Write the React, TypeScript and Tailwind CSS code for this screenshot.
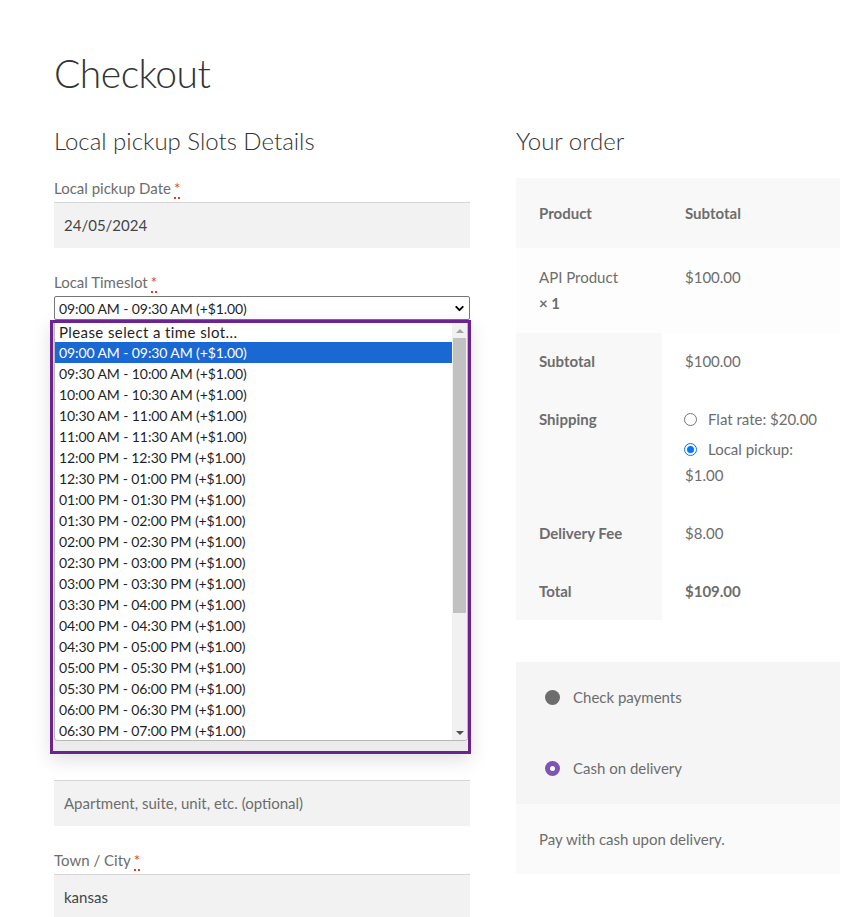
import { ChevronDown } from "lucide-react";

const slots = [
  "09:00 AM - 09:30 AM",
  "09:30 AM - 10:00 AM",
  "10:00 AM - 10:30 AM",
  "10:30 AM - 11:00 AM",
  "11:00 AM - 11:30 AM",
  "12:00 PM - 12:30 PM",
  "12:30 PM - 01:00 PM",
  "01:00 PM - 01:30 PM",
  "01:30 PM - 02:00 PM",
  "02:00 PM - 02:30 PM",
  "02:30 PM - 03:00 PM",
  "03:00 PM - 03:30 PM",
  "03:30 PM - 04:00 PM",
  "04:00 PM - 04:30 PM",
  "04:30 PM - 05:00 PM",
  "05:00 PM - 05:30 PM",
  "05:30 PM - 06:00 PM",
  "06:00 PM - 06:30 PM",
  "06:30 PM - 07:00 PM",
];

const Required = () => (
  <abbr className="ml-[3px] text-[#e2401c] no-underline border-b-2 border-dotted border-[#e2401c] leading-[10px]">
    *
  </abbr>
);

const FieldLabel = ({ text }: { text: string }) => (
  <label className="block h-5 text-[15px] leading-5 text-[#6d6d6d]">
    {text}
    <Required />
  </label>
);

const TimeslotDropdown = () => (
  <div className="absolute left-[-4px] top-full z-10 flex h-[434px] w-[421px] flex-col border-[3px] border-[#6a2391] bg-linear-to-b from-[#cfcfcf] to-[#ececec] pl-px shadow-[0_6px_18px_rgba(0,0,0,0.12)]">
    <div className="flex h-[418px] w-[414px] overflow-hidden rounded-b-[4px] border-x border-b border-[#b9b9b9] bg-white">
      <ul className="flex-1 text-[14px] tracking-[-0.1px] text-[#1f1f1f]">
        <li className="flex h-[19px] items-center pl-[4px] text-[15px] tracking-[0.4px]">Please select a time slot...</li>
        {slots.map((s, i) => (
          <li
            key={s}
            className={
              i === 0
                ? "flex h-[21px] items-center bg-[#1a68d4] pl-[4px] text-white"
                : "flex h-[21px] items-center pl-[4px]"
            }
          >
            {s} (+$1.00)
          </li>
        ))}
      </ul>
      <div className="flex w-[15px] flex-col bg-[#f1f1f1]">
        <div className="flex h-[15px] items-center justify-center">
          <span className="h-0 w-0 border-x-[4px] border-b-[4px] border-x-transparent border-b-[#a3a3a3]" />
        </div>
        <div className="mx-auto h-[275px] w-[13px] bg-[#c1c1c1]" />
        <div className="flex-1" />
        <div className="flex h-[15px] items-center justify-center">
          <span className="h-0 w-0 border-x-[4px] border-t-[4px] border-x-transparent border-t-[#505050]" />
        </div>
      </div>
    </div>
  </div>
);

const BrowserRadio = ({ checked }: { checked?: boolean }) =>
  checked ? (
    <span className="flex h-[13px] w-[13px] items-center justify-center rounded-full border-[1.5px] border-[#0075ff] bg-white">
      <span className="h-[7px] w-[7px] rounded-full bg-[#0075ff]" />
    </span>
  ) : (
    <span className="h-[13px] w-[13px] rounded-full border border-[#767676] bg-white" />
  );

export default function App() {
  return (
    <div className="min-h-[917px] bg-white pl-[54px] pr-[28px] pt-[50px] font-['Lato','Liberation_Sans',sans-serif] text-[15px] text-[#6d6d6d]">
      <h1 className="h-[46px] text-[39px] font-light leading-[46px] tracking-[-0.5px] text-[#333]">Checkout</h1>
      <div className="mt-[29px] flex gap-[46px]">
        {/* billing / pickup fields */}
        <div className="w-[416px] shrink-0">
          <h3 className="h-8 text-[24px] font-light leading-8 text-[#333]">Local pickup Slots Details</h3>
          <div className="mt-[21px]">
            <FieldLabel text="Local pickup Date" />
            <div className="mt-1 flex h-[46px] items-center border-t border-[#d6d6d6] bg-[#f2f2f2] px-[10px] text-[#43454b]">
              24/05/2024
            </div>
          </div>
          <div className="mt-6">
            <FieldLabel text="Local Timeslot" />
            <div className="relative mt-1">
              <div className="flex h-6 items-center justify-between rounded-[2px] border border-[#767676] bg-white pl-1 pr-[3px] text-[14px] tracking-[-0.1px] text-[#1f1f1f]">
                <span>09:00 AM - 09:30 AM (+$1.00)</span>
                <ChevronDown size={13} strokeWidth={3.5} className="text-black" />
              </div>
              <TimeslotDropdown />
            </div>
          </div>
          <div className="h-[460px]" />
          <div className="flex h-[46px] items-center border-t border-[#d6d6d6] bg-[#f2f2f2] px-[10px] text-[#6d6d6d]">
            Apartment, suite, unit, etc. (optional)
          </div>
          <div className="mt-6">
            <FieldLabel text="Town / City" />
            <div className="mt-1 flex h-[46px] items-center border-t border-[#d6d6d6] bg-[#f2f2f2] px-[10px] text-[#43454b]">
              kansas
            </div>
          </div>
        </div>

        {/* order review */}
        <div className="w-[324px] shrink-0">
          <h3 className="h-8 text-[24px] font-light leading-8 text-[#333]">Your order</h3>
          <table className="mt-[21px] w-full border-collapse text-left">
            <thead>
              <tr className="h-[70px] bg-[#f8f8f8]">
                <th className="w-[146px] px-[23px] font-bold">Product</th>
                <th className="px-[23px] font-bold">Subtotal</th>
              </tr>
            </thead>
            <tbody>
              <tr className="h-[85px] bg-[#fdfdfd] align-top">
                <td className="px-[23px] pt-[16px] leading-[26px]">
                  API Product
                  <br />
                  <strong className="font-bold">× 1</strong>
                </td>
                <td className="px-[23px] pt-[16px] leading-[26px]">$100.00</td>
              </tr>
            </tbody>
            <tfoot>
              <tr className="h-[57px]">
                <th className="bg-[#f8f8f8] px-[23px] font-bold">Subtotal</th>
                <td className="bg-white px-[23px]">$100.00</td>
              </tr>
              <tr className="h-[115px] align-top">
                <th className="bg-[#f8f8f8] px-[23px] pt-[16px] font-bold leading-[26px]">Shipping</th>
                <td className="bg-white pl-[22px] pr-2 pt-[16px] leading-[26px]">
                  <div className="flex items-center gap-[11px]">
                    <BrowserRadio />
                    <span>Flat rate: $20.00</span>
                  </div>
                  <div className="mt-[4px] flex items-center gap-[11px]">
                    <BrowserRadio checked />
                    <span>Local pickup:</span>
                  </div>
                  <div className="pl-px">$1.00</div>
                </td>
              </tr>
              <tr className="h-[57px]">
                <th className="bg-[#f8f8f8] px-[23px] font-bold">Delivery Fee</th>
                <td className="bg-white px-[23px]">$8.00</td>
              </tr>
              <tr className="h-[58px]">
                <th className="bg-[#f8f8f8] px-[23px] font-bold">Total</th>
                <td className="bg-white px-[23px] font-bold">$109.00</td>
              </tr>
            </tfoot>
          </table>

          <div className="mt-[42px]">
            <div className="bg-[#f5f5f5]">
              <div className="flex h-[71px] items-center gap-[13px] px-[29px]">
                <span className="h-[15px] w-[15px] rounded-full bg-[#6d6d6d]" />
                <span>Check payments</span>
              </div>
              <div className="flex h-[71px] items-center gap-[13px] px-[29px]">
                <span className="flex h-[15px] w-[15px] items-center justify-center rounded-full bg-[#7f54b3]">
                  <span className="h-[5px] w-[5px] rounded-full bg-white" />
                </span>
                <span>Cash on delivery</span>
              </div>
            </div>
            <div className="flex h-[70px] items-center bg-[#fafafa] px-[23px]">Pay with cash upon delivery.</div>
          </div>
        </div>
      </div>
    </div>
  );
}
